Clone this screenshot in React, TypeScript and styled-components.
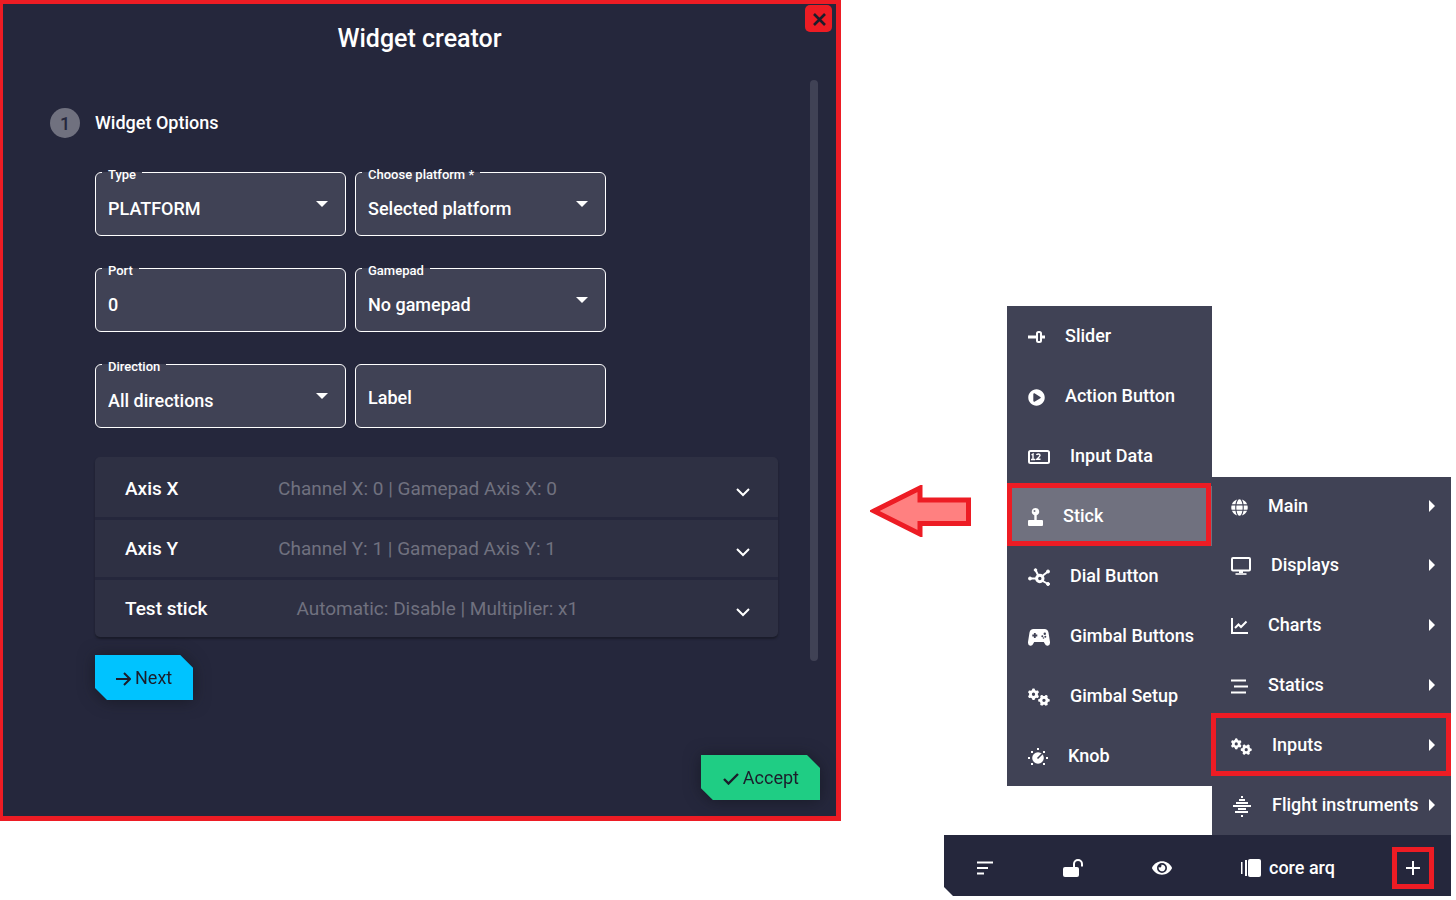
import React from "react";
import styled, { createGlobalStyle } from "styled-components";
import { FaPlayCircle, FaEye, FaGlobe } from "react-icons/fa";
import { FaGears } from "react-icons/fa6";

const c = {
  red: "#ed1c24",
  panel: "#25273c",
  surface: "#404255",
  row: "#2e3043",
  muted: "#70717f",
  ink: "#1b1d2b",
  cyan: "#00c3ff",
  green: "#1fcd84",
};

const GlobalStyle = createGlobalStyle`
  *, *::before, *::after { box-sizing: border-box; }
  body { margin: 0; background: #fff; font-family: Roboto, "Liberation Sans", sans-serif; font-size: 18px; font-weight: 500; color: #fff; }
  button, input, select { font: inherit; color: inherit; border: 0; background: none; padding: 0; margin: 0; }
  button { cursor: pointer; }
  ul { list-style: none; margin: 0; padding: 0; }
  h1, h2 { margin: 0; font-weight: 500; }
  svg { display: block; flex: none; }
`;

const Page = styled.main`
  display: grid;
  grid-template-columns: minmax(0, 1fr) 615px;
  align-items: start;
`;

const Dialog = styled.section`
  position: relative;
  background: ${c.panel};
  border: solid ${c.red};
  border-width: 4px 5px 5px 3px;
`;

const CloseButton = styled.button`
  position: absolute;
  top: 1px;
  right: 4px;
  width: 27px;
  height: 27px;
  display: grid;
  place-items: center;
  padding: 2px 0 0 1px;
  border-radius: 5px;
  background: ${c.red};
  color: ${c.ink};
`;

const Title = styled.h1`
  padding: 19px 0 25px;
  font-size: 25px;
  line-height: 32px;
  text-align: center;
`;

const Body = styled.div`
  display: flex;
  padding: 0 18px 0 47px;
`;

const Step = styled.div`
  flex: 1;
  min-width: 0;
  padding: 28px 32px 0 0;
`;

const StepHeader = styled.header`
  display: flex;
  align-items: center;
  gap: 15px;
  height: 30px;
`;

const StepNumber = styled.span`
  width: 30px;
  height: 30px;
  border-radius: 50%;
  background: ${c.muted};
  color: ${c.panel};
  line-height: 31px;
  text-align: center;
`;

const StepTitle = styled.h2`
  font-size: 18px;
  line-height: 24px;
`;

const StepContent = styled.form`
  padding: 34px 0 0 45px;
`;

const ScrollThumb = styled.div`
  width: 8px;
  margin-bottom: 39px;
  border-radius: 4px;
  background: ${c.surface};
`;

const FieldGrid = styled.div`
  display: grid;
  grid-template-columns: repeat(2, minmax(0, 1fr));
  gap: 32px 9px;
  padding-right: 172px;
`;

const FieldBox = styled.div`
  position: relative;
  height: 64px;
  border: 1px solid #fff;
  border-radius: 6px;
  background: ${c.surface};

  > svg {
    position: absolute;
    right: 17px;
    top: 28px;
    pointer-events: none;
  }
`;

const FieldLabel = styled.label`
  position: absolute;
  left: 6px;
  top: -7px;
  padding: 0 6px;
  font-size: 13px;
  line-height: 18px;
  background: linear-gradient(transparent 6px, ${c.surface} 6px);
`;

const Control = styled.input<{ $labelled?: boolean }>`
  display: block;
  width: 100%;
  height: 100%;
  padding: ${(p) => (p.$labelled ? "9px" : "2px")} 40px 0 12px;
  appearance: none;
  outline: none;

  &::placeholder {
    color: #fff;
    opacity: 1;
  }
`;

const Accordion = styled.div`
  margin-top: 29px;
  border-radius: 5px;
  overflow: hidden;
  background: ${c.row};
  box-shadow: 0 2px 2px rgba(20, 21, 30, 0.6);
`;

const AccordionRow = styled.button`
  display: flex;
  align-items: center;
  width: 100%;
  height: 60px;
  padding: 2px 28px 0 30px;
  font-size: 19px;
  text-align: left;

  & + & {
    border-top: 3px solid ${c.panel};
    padding-top: 0;
  }
`;

const RowTitle = styled.span`
  flex: 1 1 auto;
  margin-right: 16px;
`;

const RowText = styled.span`
  flex: 2 1 auto;
  color: ${c.muted};
  font-weight: 400;
`;

const RowChevron = styled.span`
  margin: 8px 0 0 12px;
`;

const ButtonShadow = styled.div<{ $end?: boolean }>`
  display: flex;
  justify-content: ${(p) => (p.$end ? "flex-end" : "flex-start")};
  padding: ${(p) => (p.$end ? "55px 16px 16px" : "18px 0 0")};
  filter: drop-shadow(0 1px 8px rgba(15, 16, 24, 0.6));
`;

const CutButton = styled.button<{ $color: string }>`
  display: flex;
  align-items: center;
  gap: 4px;
  height: 45px;
  padding: 0 21px;
  background: ${(p) => p.$color};
  color: ${c.ink};
  font-weight: 400;
  clip-path: polygon(0 0, calc(100% - 13px) 0, 100% 13px, 100% 100%, 12px 100%, 0 calc(100% - 12px));

  svg {
    margin-top: 2px;
  }
`;

const Side = styled.div`
  display: flex;
  flex-direction: column;
  align-items: flex-end;
  padding: 306px 5px 0 29px;
`;

const MenuArea = styled.div`
  display: flex;
  align-items: flex-start;
  width: 100%;
`;

const ArrowSlot = styled.div`
  flex: 1;
  padding-top: 179px;
`;

const Menu = styled.ul<{ $width: number; $drop?: boolean }>`
  width: ${(p) => p.$width}px;
  margin-top: ${(p) => (p.$drop ? 171 : 0)}px;
  background: ${c.surface};
`;

const MenuEntry = styled.li<{ $active?: boolean; $marked?: boolean }>`
  position: relative;
  background: ${(p) => (p.$active ? c.muted : "transparent")};

  &::after {
    content: "";
    display: ${(p) => (p.$marked ? "block" : "none")};
    position: absolute;
    inset: ${(p) => (p.$active ? "-3px 1px 0 0" : "-2px 0 -1px -1px")};
    border: 5px solid ${c.red};
    pointer-events: none;
  }
`;

const MenuButton = styled.button<{ $sub?: boolean; $short?: boolean }>`
  display: flex;
  align-items: center;
  width: 100%;
  height: ${(p) => (p.$short ? 58 : 60)}px;
  padding: 0 16px 2px ${(p) => (p.$sub ? 21 : 19)}px;
  text-align: left;
  white-space: nowrap;

  > svg:first-child {
    margin: 4px 20px 0 0;
  }
  > svg:not(:first-child) {
    margin: 2px 0 0 auto;
  }
`;

const Toolbar = styled.nav`
  display: flex;
  align-items: center;
  width: 507px;
  height: 61px;
  padding: 4px 17px 0 33px;
  background: ${c.panel};
  clip-path: polygon(0 0, 100% 0, 100% 100%, 9px 100%, 0 calc(100% - 9px));
`;

const ToolButton = styled.button`
  display: flex;
  align-items: center;
  gap: 8px;
  line-height: 22px;
  white-space: nowrap;

  & + & {
    margin-left: 69px;
  }
`;

const AddButton = styled.button`
  display: grid;
  place-items: center;
  flex: none;
  width: 42px;
  height: 42px;
  margin-left: auto;
  border: 5px solid ${c.red};
`;

const Caret = () => (
  <svg width="12" height="6" viewBox="0 0 12 6"><path d="M0 0h12L6 6z" fill="#fff" /></svg>
);

const Chevron = () => (
  <svg width="14" height="9" viewBox="0 0 14 9" fill="none" stroke="#fff" strokeWidth="2"><path d="M1 1l6 6 6-6" /></svg>
);

const MenuCaret = () => (
  <svg width="6" height="12" viewBox="0 0 6 12"><path d="M0 0v12l6-6z" fill="#fff" /></svg>
);

const SliderIcon = () => (
  <svg width="17" height="14" viewBox="0 0 17 14" fill="none" stroke="#fff">
    <path d="M0 7h8M14 7h3" strokeWidth="3" />
    <rect x="9" y="2" width="4" height="10" rx="1.5" strokeWidth="2" />
  </svg>
);

const InputDataIcon = () => (
  <svg width="22" height="14" viewBox="0 0 22 14" fill="none" stroke="#fff">
    <rect x="1" y="1" width="20" height="12" rx="1.5" strokeWidth="2" />
    <path d="M3.500 5l1.500-1v5.500M3 9.500h4M8.500 5q.3-1 1.800-1 1.700 0 1.700 1.300 0 1-3.200 4h3.700" strokeWidth="1.400" />
  </svg>
);

const StickIcon = () => (
  <svg width="15" height="18" viewBox="0 0 15 18" fill="#fff">
    <path fillRule="evenodd" d="M7.500 0a3.700 3.700 0 0 1 1.200 7.200V12H14q1 0 1 1v4q0 1-1 1H1q-1 0-1-1v-4q0-1 1-1h5.300V7.200A3.700 3.700 0 0 1 7.500 0zM6.500 2a1 1 0 1 0 0 2 1 1 0 0 0 0-2z" />
  </svg>
);

const DialIcon = () => (
  <svg width="22" height="18" viewBox="0 0 22 18" fill="#fff" stroke="#fff">
    <path d="M2 10.500h6M11 9L7.500 2M13 9l7-5.500M13 12l7 4" strokeWidth="2" />
    <circle cx="2" cy="10.500" r="1.500" /><circle cx="7.500" cy="2" r="1.300" />
    <circle cx="20" cy="3.500" r="1.500" /><circle cx="20" cy="16" r="1.500" />
    <circle cx="11.800" cy="10.500" r="3.200" fill={c.surface} strokeWidth="3" />
  </svg>
);

const PadIcon = () => (
  <svg width="22" height="17" viewBox="0 0 22 17">
    <path d="M5.500 0h11q3.300 0 4 3.500L22 13q.2 3.500-2.300 3.800-2 .2-2.900-2L15.800 13H6.200l-1 1.800q-.9 2.200-2.900 2Q-.2 16.500 0 13L1.500 3.500Q2.200 0 5.500 0z" fill="#fff" />
    <path d="M6.800 4v5M4.300 6.500h5" stroke={c.surface} strokeWidth="1.800" />
    <g fill={c.surface}><circle cx="16.800" cy="4.800" r="1.200" /><circle cx="14.300" cy="7.300" r="1" /><circle cx="17.300" cy="7.700" r="1" /><circle cx="15.500" cy="9" r=".8" /></g>
  </svg>
);

const KnobIcon = () => (
  <svg width="20" height="18" viewBox="0 0 20 18" fill="#fff">
    <circle cx="10" cy="10" r="5.800" />
    <path d="M9.500 10.500L14 6" stroke={c.surface} strokeWidth="1.600" />
    <path d="M9 0h2v2H9zM3 3h2v2H3zM15 3h2v2h-2zM0 9h2v2H0zM18 9h2v2h-2zM3 15h2v2H3zM15 15h2v2h-2z" />
  </svg>
);

const DisplayIcon = () => (
  <svg width="20" height="18" viewBox="0 0 20 18" fill="none" stroke="#fff" strokeWidth="2">
    <rect x="1" y="1" width="18" height="12.500" rx="1" />
    <path d="M10 13v3" strokeWidth="4" /><path d="M4.500 17h11" strokeWidth="1.600" />
  </svg>
);

const ChartIcon = () => (
  <svg width="17" height="16" viewBox="0 0 17 16" fill="none" stroke="#fff" strokeWidth="2">
    <path d="M1 0v15h16" /><path d="M4 10l3.500-3.500 2.500 2.500L15.500 3.500" />
  </svg>
);

const StaticsIcon = () => (
  <svg width="17" height="15" viewBox="0 0 17 15" fill="none" stroke="#fff" strokeWidth="2">
    <path d="M0 1.500h15M3 7.500h14M0 13.500h15" />
  </svg>
);

const FlightIcon = () => (
  <svg width="21" height="22" viewBox="0 0 21 22" fill="none" stroke="#fff" strokeWidth="2">
    <path d="M10 2h2M8 5h6M5 8h12M2 11h18M7 14h8M4 17h13M10 21h2" />
  </svg>
);

const SortIcon = () => (
  <svg width="16" height="14" viewBox="0 0 16 14" fill="none" stroke="#fff" strokeWidth="2">
    <path d="M0 1.500h16M0 7h11M0 12.500h7" />
  </svg>
);

const UnlockIcon = () => (
  <svg width="21" height="18" viewBox="0 0 21 18" fill="#fff">
    <rect x="1" y="8" width="16" height="10" rx="2" />
    <path d="M12 9V5a4 4 0 0 1 8 0v2.500" fill="none" stroke="#fff" strokeWidth="2" />
  </svg>
);

const LayersIcon = () => (
  <svg width="20" height="18" viewBox="0 0 20 18" fill="#fff">
    <rect x="7" width="13" height="18" rx="2" />
    <path d="M4 1h2v16H4zM0 3h1.500v12H0z" />
  </svg>
);

type Entry = { label: string; icon: React.ReactNode; active?: boolean; marked?: boolean };

const inputEntries: Entry[] = [
  { label: "Slider", icon: <SliderIcon /> },
  { label: "Action Button", icon: <FaPlayCircle size={17} /> },
  { label: "Input Data", icon: <InputDataIcon /> },
  { label: "Stick", icon: <StickIcon />, active: true, marked: true },
  { label: "Dial Button", icon: <DialIcon /> },
  { label: "Gimbal Buttons", icon: <PadIcon /> },
  { label: "Gimbal Setup", icon: <FaGears size={22} /> },
  { label: "Knob", icon: <KnobIcon /> },
];

const mainEntries: Entry[] = [
  { label: "Main", icon: <FaGlobe size={17} /> },
  { label: "Displays", icon: <DisplayIcon /> },
  { label: "Charts", icon: <ChartIcon /> },
  { label: "Statics", icon: <StaticsIcon /> },
  { label: "Inputs", icon: <FaGears size={21} />, marked: true },
  { label: "Flight instruments", icon: <FlightIcon /> },
];

const axes = [
  ["Axis X", "Channel X: 0 | Gamepad Axis X: 0"],
  ["Axis Y", "Channel Y: 1 | Gamepad Axis Y: 1"],
  ["Test stick", "Automatic: Disable | Multiplier: x1"],
];

function SelectField({ id, label, value }: { id: string; label: string; value: string }) {
  return (
    <FieldBox>
      <Control as="select" id={id} $labelled defaultValue={value}>
        <option>{value}</option>
      </Control>
      <FieldLabel htmlFor={id}>{label}</FieldLabel>
      <Caret />
    </FieldBox>
  );
}

export default function App() {
  return (
    <>
      <GlobalStyle />
      <Page>
        <Dialog role="dialog" aria-labelledby="dialog-title">
          <Title id="dialog-title">Widget creator</Title>
          <CloseButton type="button" aria-label="Close">
            <svg width="13" height="13" viewBox="0 0 13 13" fill="none" stroke="currentColor" strokeWidth="2.600"><path d="M1 1l11 11M12 1L1 12" /></svg>
          </CloseButton>
          <Body>
            <Step>
              <StepHeader>
                <StepNumber>1</StepNumber>
                <StepTitle>Widget Options</StepTitle>
              </StepHeader>
              <StepContent>
                <FieldGrid>
                  <SelectField id="type" label="Type" value="PLATFORM" />
                  <SelectField id="platform" label="Choose platform *" value="Selected platform" />
                  <FieldBox>
                    <Control id="port" $labelled defaultValue="0" />
                    <FieldLabel htmlFor="port">Port</FieldLabel>
                  </FieldBox>
                  <SelectField id="gamepad" label="Gamepad" value="No gamepad" />
                  <SelectField id="direction" label="Direction" value="All directions" />
                  <FieldBox>
                    <Control aria-label="Label" placeholder="Label" />
                  </FieldBox>
                </FieldGrid>
                <Accordion>
                  {axes.map(([title, text]) => (
                    <AccordionRow type="button" key={title} aria-expanded={false}>
                      <RowTitle>{title}</RowTitle>
                      <RowText>{text}</RowText>
                      <RowChevron><Chevron /></RowChevron>
                    </AccordionRow>
                  ))}
                </Accordion>
                <ButtonShadow>
                  <CutButton type="button" $color={c.cyan}>
                    <svg width="15" height="14" viewBox="0 0 15 14" fill="none" stroke="currentColor" strokeWidth="2"><path d="M0 7h14M8 1l6 6-6 6" /></svg>
                    Next
                  </CutButton>
                </ButtonShadow>
              </StepContent>
            </Step>
            <ScrollThumb />
          </Body>
          <ButtonShadow $end>
            <CutButton type="button" $color={c.green}>
              <svg width="17" height="13" viewBox="0 0 17 13" fill="none" stroke="currentColor" strokeWidth="2.400"><path d="M2 7l4.500 4.500L16 2" /></svg>
              Accept
            </CutButton>
          </ButtonShadow>
        </Dialog>

        <Side>
          <MenuArea>
            <ArrowSlot>
              <svg width="101" height="52" viewBox="0 0 101 52"><path d="M4 26L50 3v12h48.500v23.500H50V49z" fill="#ff8080" stroke={c.red} strokeWidth="5" /></svg>
            </ArrowSlot>
            <Menu $width={205}>
              {inputEntries.map((e) => (
                <MenuEntry key={e.label} $active={e.active} $marked={e.marked}>
                  <MenuButton type="button" $sub>{e.icon}{e.label}</MenuButton>
                </MenuEntry>
              ))}
            </Menu>
            <Menu $width={239} $drop>
              {mainEntries.map((e, i) => (
                <MenuEntry key={e.label} $marked={e.marked}>
                  <MenuButton type="button" $short={i === 0}>{e.icon}{e.label}<MenuCaret /></MenuButton>
                </MenuEntry>
              ))}
            </Menu>
          </MenuArea>
          <Toolbar>
            <ToolButton type="button" aria-label="Sort"><SortIcon /></ToolButton>
            <ToolButton type="button" aria-label="Unlock"><UnlockIcon /></ToolButton>
            <ToolButton type="button" aria-label="Show"><FaEye size={20} /></ToolButton>
            <ToolButton type="button"><LayersIcon />core arq</ToolButton>
            <AddButton type="button" aria-label="Add">
              <svg width="14" height="14" viewBox="0 0 14 14" stroke="#fff" strokeWidth="2"><path d="M7 0v14M0 7h14" /></svg>
            </AddButton>
          </Toolbar>
        </Side>
      </Page>
    </>
  );
}
